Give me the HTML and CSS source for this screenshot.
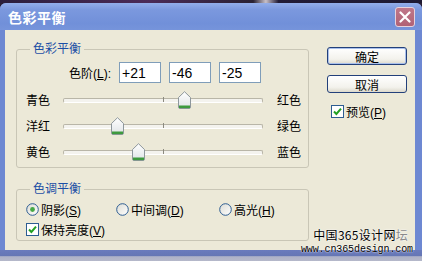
FILE: index.html
```html
<!DOCTYPE html>
<html lang="zh-CN">
<head>
    <meta charset="UTF-8">
    <title>色彩平衡</title>
    <link rel="stylesheet" href="styles.css">
</head>
<body>
    <div class="top-strip"></div>

    <div class="window">
        <div class="titlebar">
            <span class="title">色彩平衡</span>
            <span class="close-btn">
                <svg width="12" height="12" viewBox="0 0 12 12"><path d="M1.5 1.5 L10.5 10.5 M10.5 1.5 L1.5 10.5" stroke="#fff" stroke-width="2.2" stroke-linecap="round"/></svg>
            </span>
        </div>

        <div class="client">
            <div class="main-col">
                <fieldset class="group">
                    <legend>色彩平衡</legend>
                    <div class="group-body">
                        <div class="levels">
                            <span class="levels-label">色阶(<u>L</u>):</span>
                            <input class="level-input" value="+21">
                            <input class="level-input" value="-46">
                            <input class="level-input" value="-25">
                        </div>

                        <div class="sliders">
                            <div class="slider-row">
                                <span class="slider-label">青色</span>
                                <div class="track">
                                    <span class="tick"></span>
                                    <span class="thumb" style="left: 60.5%">
                                        <svg width="13" height="18" viewBox="0 0 13 18"><defs><linearGradient id="tg1" x1="0" y1="0" x2="0" y2="1"><stop offset="0" stop-color="#ffffff"/><stop offset="1" stop-color="#dfe3e6"/></linearGradient></defs><path d="M0.5 6.5 L6.5 0.7 L12.5 6.5 V16 Q12.5 17.5 11 17.5 H2 Q0.5 17.5 0.5 16 Z" fill="url(#tg1)" stroke="#8e979c"/><rect x="1" y="14.5" width="11" height="2.6" fill="#3e9a3e"/></svg>
                                    </span>
                                </div>
                                <span class="slider-end">红色</span>
                            </div>

                            <div class="slider-row">
                                <span class="slider-label">洋红</span>
                                <div class="track">
                                    <span class="tick"></span>
                                    <span class="thumb" style="left: 27%">
                                        <svg width="13" height="18" viewBox="0 0 13 18"><path d="M0.5 6.5 L6.5 0.7 L12.5 6.5 V16 Q12.5 17.5 11 17.5 H2 Q0.5 17.5 0.5 16 Z" fill="url(#tg1)" stroke="#8e979c"/><rect x="1" y="14.5" width="11" height="2.6" fill="#3e9a3e"/></svg>
                                    </span>
                                </div>
                                <span class="slider-end">绿色</span>
                            </div>

                            <div class="slider-row">
                                <span class="slider-label">黄色</span>
                                <div class="track">
                                    <span class="tick"></span>
                                    <span class="thumb" style="left: 37.5%">
                                        <svg width="13" height="18" viewBox="0 0 13 18"><path d="M0.5 6.5 L6.5 0.7 L12.5 6.5 V16 Q12.5 17.5 11 17.5 H2 Q0.5 17.5 0.5 16 Z" fill="url(#tg1)" stroke="#8e979c"/><rect x="1" y="14.5" width="11" height="2.6" fill="#3e9a3e"/></svg>
                                    </span>
                                </div>
                                <span class="slider-end">蓝色</span>
                            </div>
                        </div>
                    </div>
                </fieldset>

                <fieldset class="group tone">
                    <legend>色调平衡</legend>
                    <div class="group-body">
                        <div class="tone-row">
                            <span class="option">
                                <svg width="13" height="13" viewBox="0 0 13 13"><defs><linearGradient id="rg" x1="0" y1="0" x2="1" y2="1"><stop offset="0" stop-color="#dcdcd4"/><stop offset="1" stop-color="#ffffff"/></linearGradient></defs><circle cx="6.5" cy="6.5" r="5.8" fill="url(#rg)" stroke="#2d5d92"/><circle cx="6.5" cy="6.5" r="2.4" fill="#45a845"/></svg>
                                <span>阴影(<u>S</u>)</span>
                            </span>
                            <span class="option">
                                <svg width="13" height="13" viewBox="0 0 13 13"><circle cx="6.5" cy="6.5" r="5.8" fill="url(#rg)" stroke="#2d5d92"/></svg>
                                <span>中间调(<u>D</u>)</span>
                            </span>
                            <span class="option">
                                <svg width="13" height="13" viewBox="0 0 13 13"><circle cx="6.5" cy="6.5" r="5.8" fill="url(#rg)" stroke="#2d5d92"/></svg>
                                <span>高光(<u>H</u>)</span>
                            </span>
                        </div>
                        <div class="check-row">
                            <span class="option">
                                <svg width="13" height="13" viewBox="0 0 13 13"><rect x="0.5" y="0.5" width="12" height="12" fill="#fff" stroke="#2d5d92"/><path d="M3 6.5 L5.4 9 L10 3.6" fill="none" stroke="#22a022" stroke-width="2"/></svg>
                                <span>保持亮度(<u>V</u>)</span>
                            </span>
                        </div>
                    </div>
                </fieldset>
            </div>

            <div class="side-col">
                <div class="btn btn-default">确定</div>
                <div class="btn">取消</div>
                <div class="preview-row">
                    <svg width="13" height="13" viewBox="0 0 13 13"><rect x="0.5" y="0.5" width="12" height="12" fill="#fff" stroke="#2d5d92"/><path d="M3 6.5 L5.4 9 L10 3.6" fill="none" stroke="#22a022" stroke-width="2"/></svg>
                    <span>预览(<u>P</u>)</span>
                </div>
            </div>

            <div class="watermark">
                <div class="wm-line1">中国365设计网<span class="wm-fade">坛</span></div>
                <div class="wm-line2">www.cn365design.com</div>
            </div>
        </div>

        <div class="frame-bottom"></div>
    </div>
</body>
</html>
```

FILE: styles.css
```css
* {
    margin: 0;
    padding: 0;
    box-sizing: border-box;
}

body {
    width: 422px;
    height: 261px;
    overflow: hidden;
    background: #2a2036;
    font-family: 'Liberation Sans', 'Noto Sans CJK SC', sans-serif;
    font-size: 12px;
    color: #000;
}

.top-strip {
    height: 3px;
    background: linear-gradient(90deg, #2b1e3c, #4b2b58 35%, #2a2233 60%, #c8c0c8 63%, #221c36 66%, #1e1a33);
}

.window {
    height: 258px;
    display: flex;
    flex-direction: column;
    background: #6d88d2;
    border-radius: 6px 6px 0 0;
}

.titlebar {
    height: 27px;
    display: flex;
    align-items: center;
    justify-content: space-between;
    padding: 0 7px 0 8px;
    background: linear-gradient(#93aeea, #7b98de 25%, #7190d9 75%, #7694db);
    border-radius: 6px 6px 0 0;
}

.title {
    color: #fff;
    font-weight: bold;
    font-size: 14px;
    letter-spacing: 0.5px;
}

.close-btn {
    width: 20px;
    height: 20px;
    border: 1px solid #e6d2dc;
    border-radius: 3px;
    background: linear-gradient(#c0778a, #b06275);
    display: flex;
    align-items: center;
    justify-content: center;
}

.client {
    height: 220px;
    margin: 0 7px 0 5px;
    background: #ece9d8;
    position: relative;
    display: flex;
    gap: 18px;
    padding-left: 11px;
}

.frame-bottom {
    flex: 1;
    background: linear-gradient(#6a7bbd 0, #6576b4 55%, #aeb2c8 60%, #b5b8ca 100%);
}

.main-col {
    width: 293px;
    padding-top: 12px;
}

.group {
    border: 1px solid #c9c6b6;
    border-radius: 3px;
}

.group legend {
    margin-left: 13px;
    padding: 0 3px;
    color: #1d4fa5;
    line-height: 14px;
}

.group-body {
    padding: 0 5px 3px 9px;
}

.levels {
    display: flex;
    align-items: center;
    gap: 8px;
    margin-top: 6px;
    height: 21px;
}

.levels-label {
    width: 85px;
    text-align: right;
}

.level-input {
    width: 42px;
    height: 21px;
    border: 1px solid #7f9db9;
    background: #fff;
    padding: 0 2px;
    font-family: 'Liberation Sans', sans-serif;
    font-size: 14px;
    color: #000;
}

.sliders {
    margin-top: 3px;
}

.slider-row {
    display: flex;
    align-items: center;
    height: 26px;
    white-space: nowrap;
}

.slider-label {
    width: 37px;
    flex: none;
}

.track {
    width: 200px;
    height: 26px;
    position: relative;
    flex: none;
}

.track::before {
    content: '';
    position: absolute;
    left: 0;
    right: 0;
    top: 12px;
    height: 3px;
    border-radius: 2px;
    border: 1px solid #b9b6a8;
    border-bottom-color: #fff;
    background: #f4f3ee;
}

.tick {
    position: absolute;
    left: 100px;
    top: 11px;
    width: 1px;
    height: 5px;
    background: #8c8a80;
}

.thumb {
    position: absolute;
    top: 5px;
    width: 13px;
    height: 18px;
    margin-left: -6px;
    display: block;
}

.thumb svg {
    display: block;
}

.slider-end {
    margin-left: 14px;
    flex: none;
}

.tone {
    margin-top: 14px;
}

.tone-row {
    display: grid;
    grid-template-columns: 90px 103px auto;
    margin-top: 5px;
    height: 16px;
    align-items: center;
}

.check-row {
    margin-top: 4px;
    height: 16px;
    display: flex;
    align-items: center;
}

.option {
    display: flex;
    align-items: center;
    gap: 2px;
}

.option svg {
    flex: none;
}

.side-col {
    padding-top: 17px;
    width: 81px;
}

.btn {
    width: 80px;
    height: 18px;
    border: 1px solid #23407a;
    border-radius: 3px;
    background: linear-gradient(#ffffff, #f3f2ec 70%, #dcd9cc);
    display: flex;
    align-items: center;
    justify-content: center;
    margin-bottom: 10px;
}

.btn-default {
    box-shadow: inset 0 0 0 1px #a9c0ec;
}

.preview-row {
    display: flex;
    align-items: center;
    gap: 2px;
    margin-top: 9px;
    margin-left: 4px;
}

.watermark {
    position: absolute;
    right: 2px;
    top: 198px;
    text-align: right;
    line-height: 13px;
}

.wm-line1 {
    font-family: 'Noto Sans CJK SC', sans-serif;
    font-size: 12px;
    padding-right: 5px;
    letter-spacing: 0.3px;
    text-shadow: 0 0 2px #fff, 0 0 1px #fff;
}

.wm-fade {
    color: #8a8a8a;
}

.wm-line2 {
    margin-top: 2px;
    font-family: 'Liberation Mono', monospace;
    font-size: 10px;
    letter-spacing: -0.1px;
    text-shadow: 0 0 2px #fff, 0 0 1px #fff;
}
```
